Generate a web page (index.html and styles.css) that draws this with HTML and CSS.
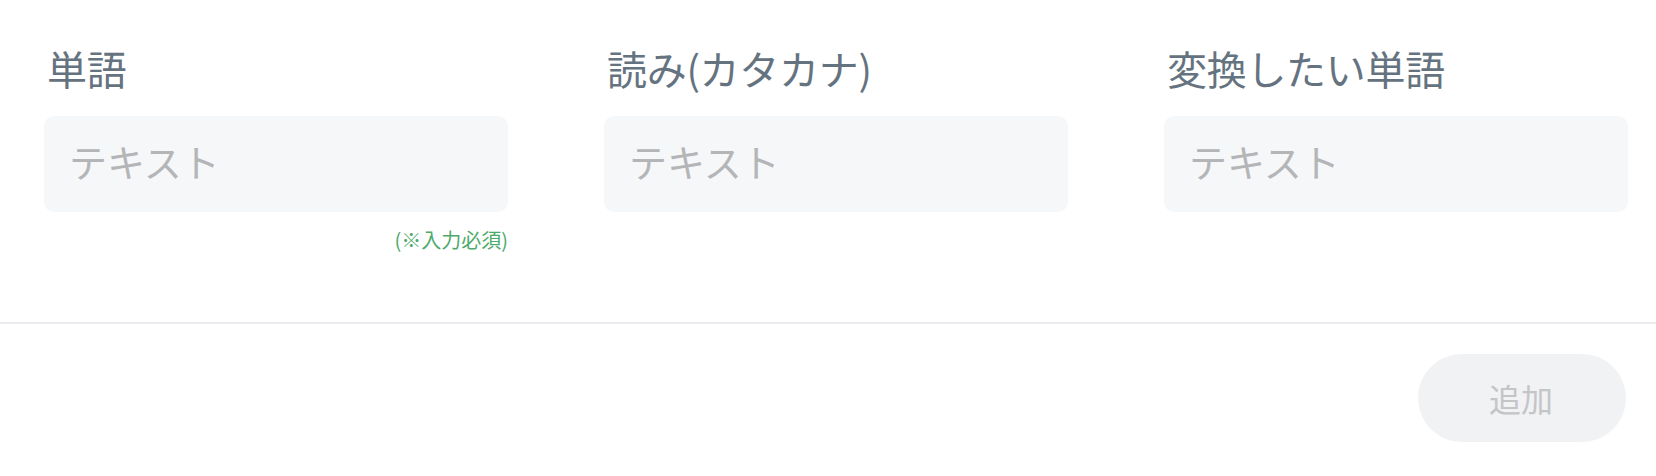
FILE: index.html
```html
<!DOCTYPE html>
<html lang="ja">
<head>
<meta charset="utf-8">
<title>単語登録</title>
<link rel="stylesheet" href="styles.css">
</head>
<body>
<div class="panel">
  <div class="fields">
    <div class="field">
      <label class="label">単語</label>
      <input class="input" type="text" placeholder="テキスト">
      <div class="note">(※入力必須)</div>
    </div>
    <div class="field">
      <label class="label">読み(カタカナ)</label>
      <input class="input" type="text" placeholder="テキスト">
    </div>
    <div class="field">
      <label class="label">変換したい単語</label>
      <input class="input" type="text" placeholder="テキスト">
    </div>
  </div>
  <div class="divider"></div>
  <div class="actions">
    <button class="btn" type="button">追加</button>
  </div>
</div>
</body>
</html>
```

FILE: styles.css
```css
html, body {
  margin: 0;
  padding: 0;
  background: #ffffff;
}
body {
  font-family: "Noto Sans CJK JP", "Noto Sans", sans-serif;
}
.panel {
  width: 1656px;
  height: 476px;
}
.fields {
  display: grid;
  grid-template-columns: repeat(3, 464px);
  column-gap: 96px;
  padding: 44px 28px 0 44px;
  height: 322px;
  box-sizing: border-box;
}
.field {
  display: flex;
  flex-direction: column;
}
.label {
  display: block;
  font-size: 40px;
  line-height: 48px;
  color: #657380;
  padding-left: 3px;
  letter-spacing: -0.3px;
}
.input {
  margin-top: 24px;
  height: 96px;
  box-sizing: border-box;
  border: none;
  outline: none;
  border-radius: 10px;
  background: #f6f7f9;
  padding: 0 26px 8px 25px;
  font-family: inherit;
  font-size: 38px;
  color: #333;
}
.input::placeholder {
  color: #b4b5b7;
}
.note {
  margin-top: 14px;
  text-align: right;
  font-size: 20px;
  line-height: 28px;
  color: #4daa6c;
}
.divider {
  height: 2px;
  background: #ebedf0;
}
.actions {
  display: flex;
  justify-content: flex-end;
  padding: 30px 30px 0 0;
}
.btn {
  width: 208px;
  height: 88px;
  border: none;
  border-radius: 44px;
  background: #f1f2f4;
  color: #c4c5c7;
  font-family: inherit;
  font-size: 32px;
  padding: 0 2px 0 0;
}
```
